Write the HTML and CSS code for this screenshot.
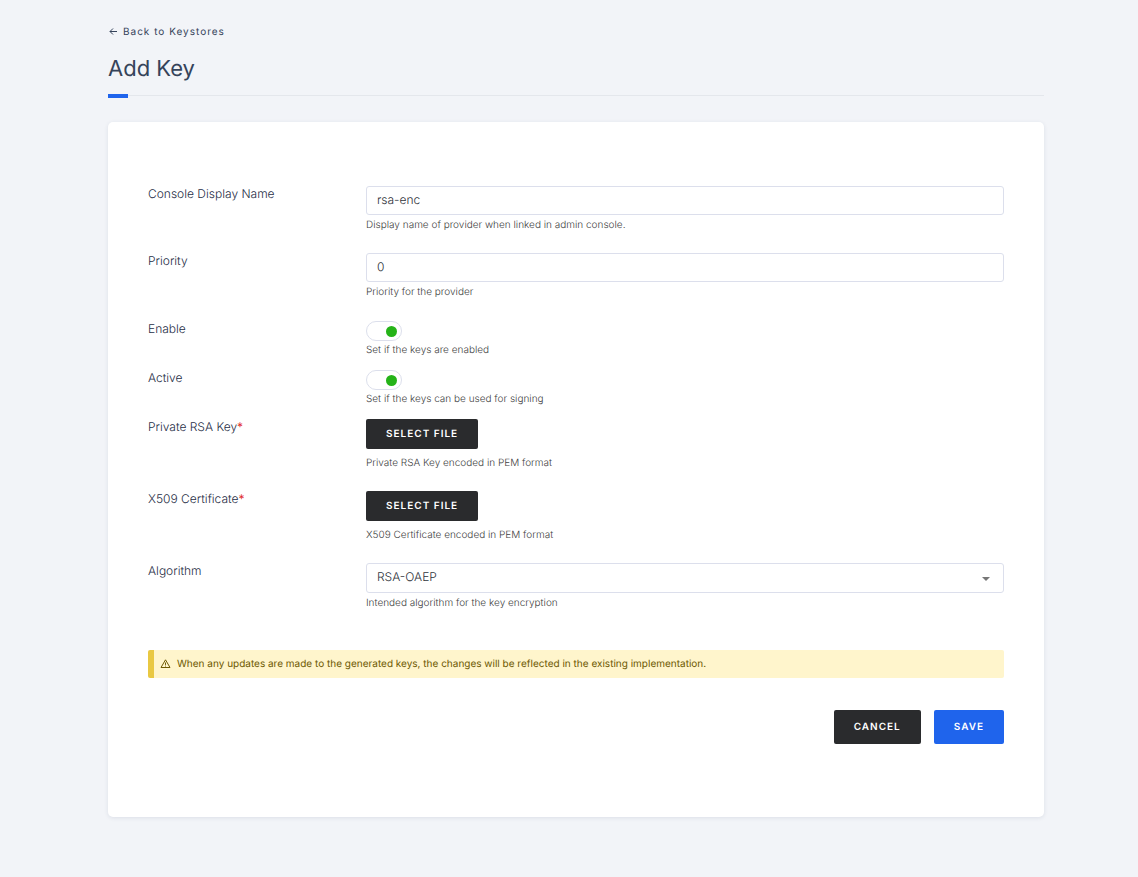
FILE: index.html
```html
<!DOCTYPE html>
<html lang="en">
<head>
<meta charset="utf-8">
<meta name="viewport" content="width=device-width, initial-scale=1">
<title>Add Key</title>
<link rel="stylesheet" href="styles.css">
</head>
<body>
<main class="page">
  <a class="back" href="#">
    <svg class="back-icon" viewBox="0 0 10 10" aria-hidden="true"><path d="M9 4.5H2M5 1.5l-3 3 3 3"/></svg>
    Back to Keystores
  </a>
  <h1 class="title">Add Key</h1>
  <form class="card">
    <div class="row">
      <label class="label" for="name">Console Display Name</label>
      <div class="field">
        <input class="control" id="name" type="text" value="rsa-enc">
        <p class="help">Display name of provider when linked in admin console.</p>
      </div>
    </div>
    <div class="row">
      <label class="label" for="priority">Priority</label>
      <div class="field">
        <input class="control" id="priority" type="text" value="0">
        <p class="help">Priority for the provider</p>
      </div>
    </div>
    <div class="switches">
      <div class="row row-switch">
        <label class="label" for="enable">Enable</label>
        <div class="field">
          <input class="switch" id="enable" type="checkbox" checked>
          <p class="help">Set if the keys are enabled</p>
        </div>
      </div>
      <div class="row row-switch">
        <label class="label" for="active">Active</label>
        <div class="field">
          <input class="switch" id="active" type="checkbox" checked>
          <p class="help">Set if the keys can be used for signing</p>
        </div>
      </div>
    </div>
    <div class="row row-file">
      <label class="label" for="private-key">Private RSA Key<span class="required">*</span></label>
      <div class="field">
        <button class="button button-file" id="private-key" type="button">SELECT FILE</button>
        <p class="help">Private RSA Key encoded in PEM format</p>
      </div>
    </div>
    <div class="row row-file">
      <label class="label" for="certificate">X509 Certificate<span class="required">*</span></label>
      <div class="field">
        <button class="button button-file" id="certificate" type="button">SELECT FILE</button>
        <p class="help">X509 Certificate encoded in PEM format</p>
      </div>
    </div>
    <div class="row">
      <label class="label" for="algorithm">Algorithm</label>
      <div class="field">
        <div class="select-wrap">
          <select class="control select" id="algorithm"><option>RSA-OAEP</option></select>
          <svg class="caret" viewBox="0 0 8 4" aria-hidden="true"><path d="M0 0h8L4 4z"/></svg>
        </div>
        <p class="help">Intended algorithm for the key encryption</p>
      </div>
    </div>
    <div class="notice" role="note">
      <svg class="notice-icon" viewBox="0 0 12 12" aria-hidden="true"><path d="M5.5 1.8L10 9.5H1zM5.5 4.5v2.4M5.5 7.6v.9"/></svg>
      When any updates are made to the generated keys, the changes will be reflected in the existing implementation.
    </div>
    <div class="actions">
      <button class="button" type="button">CANCEL</button>
      <button class="button button-primary" type="submit">SAVE</button>
    </div>
  </form>
</main>
</body>
</html>
```
FILE: styles.css
```css
* { box-sizing: border-box; }

body {
  margin: 0;
  background: #f2f4f8;
  color: #1f2e46;
  font: 300 12px/16px Inter, "Liberation Sans", sans-serif;
  text-rendering: geometricPrecision;
}

.page { padding: 24px 94px 60px 108px; }

.back {
  display: flex;
  width: fit-content;
  align-items: center;
  gap: 5px;
  color: #35435a;
  font-size: 10px;
  font-weight: 400;
  letter-spacing: 1px;
  text-decoration: none;
}

.back-icon {
  width: 10px;
  height: 10px;
  fill: none;
  stroke: currentColor;
}

.title {
  position: relative;
  margin: 14px 0 26px;
  padding-bottom: 10px;
  border-bottom: 1px solid #e4e7ec;
  color: #35435a;
  font-size: 22px;
  font-weight: 400;
  line-height: 31px;
}

.title::after {
  content: "";
  position: absolute;
  left: 0;
  bottom: -3px;
  width: 20px;
  height: 4px;
  background: #1f64ec;
}

.card {
  padding: 64px 40px 73px;
  border-radius: 5px;
  background: #fff;
  box-shadow: 0 1px 4px rgba(30, 50, 90, 0.1);
}

.row {
  display: grid;
  grid-template-columns: 218px minmax(0, 1fr);
  align-items: start;
  padding-bottom: 21px;
}

.switches { margin-top: 1px; }
.row-switch { padding-bottom: 13px; }
.required { color: #e02b2b; font-weight: 400; }

.control {
  display: block;
  width: 100%;
  height: 29px;
  padding: 0 10px 2px;
  border: 1px solid #dcdfec;
  border-radius: 3px;
  background: #fff;
  color: #2f333a;
  font: inherit;
  text-rendering: inherit;
}

.select-wrap { position: relative; }

.select {
  height: 30px;
  appearance: none;
}

.caret {
  position: absolute;
  right: 14px;
  top: 14px;
  width: 8px;
  height: 4px;
  fill: #777;
  pointer-events: none;
}

.help {
  margin: 3px 0 0;
  color: #404040;
  font-size: 10px;
  line-height: 14px;
}

.row-switch .help { margin-top: 2px; }
.row-file .help { margin-top: 7px; }

.switch {
  display: flex;
  align-items: center;
  justify-content: flex-end;
  width: 36px;
  height: 20px;
  margin: 0;
  padding: 0 4px;
  border: 1px solid #dcdfec;
  border-radius: 10px;
  background: #fff;
  appearance: none;
}

.switch::before {
  content: "";
  width: 11px;
  height: 11px;
  border-radius: 50%;
  background: #c3c8d0;
}

.switch:checked::before { background: #25b318; }

.button {
  display: block;
  height: 34px;
  padding: 0 20px;
  border: 0;
  border-radius: 2px;
  background: #2a2b2d;
  color: #fff;
  font: 600 10px/16px Inter, "Liberation Sans", sans-serif;
  letter-spacing: 1px;
  text-rendering: inherit;
}

.button-file { height: 30px; }
.button-primary { background: #1f64ec; }

.notice {
  display: flex;
  align-items: center;
  gap: 5px;
  margin-top: 19px;
  padding: 7px 6px;
  border-left: 6px solid #e9c842;
  border-radius: 2px;
  background: #fff5cc;
  color: #6d5800;
  font-size: 10px;
  font-weight: 400;
  line-height: 14px;
}

.notice-icon {
  flex: none;
  width: 12px;
  height: 12px;
  fill: none;
  stroke: currentColor;
}

.actions {
  display: flex;
  justify-content: flex-end;
  gap: 13px;
  margin-top: 32px;
}
```
